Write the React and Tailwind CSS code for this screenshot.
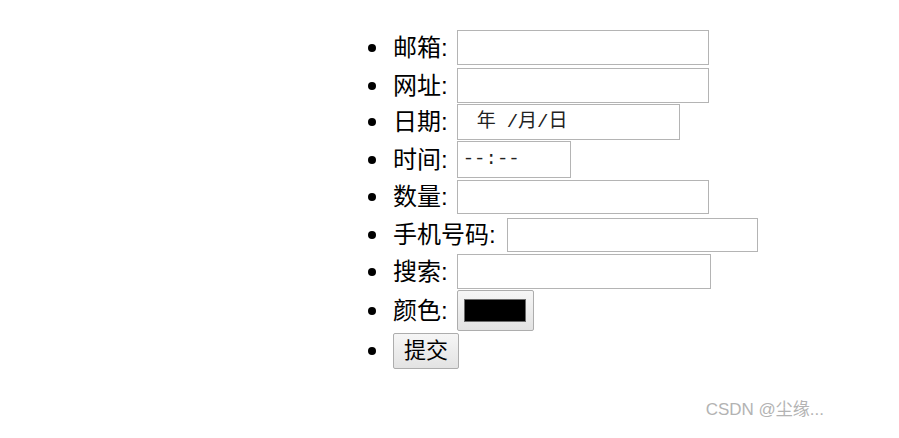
import React from 'react';

const Bullet = () => <span className="w-2 h-2 rounded-full bg-black mr-[17px] shrink-0" />;

const Field = ({ className = '', children }) => (
  <div className={`border border-[#b4b4b4] bg-white flex items-center ${className}`}>{children}</div>
);

const Row = ({ label, className = '', children }) => (
  <li className={`flex items-center ${className}`}>
    <Bullet />
    {label && <span className="text-[24px] leading-none mr-[9px] whitespace-nowrap">{label}</span>}
    {children}
  </li>
);

const App = () => {
  return (
    <div
      className="h-[438px] w-[899px] bg-white text-black flex flex-col"
      style={{ fontFamily: '"Liberation Sans", "Noto Sans CJK SC", sans-serif' }}
    >
      <ul className="pl-[368px] pt-[30px]">
        <Row label="邮箱:" className="h-[35px]">
          <Field className="w-[252px] h-[35px]" />
        </Row>
        <Row label="网址:" className="h-[35px] mt-[3px]">
          <Field className="w-[252px] h-[35px]" />
        </Row>
        <Row label="日期:" className="h-[36px] mt-[1px]">
          <Field className="w-[223px] h-[36px] pl-[19px] text-[19px] font-['Liberation_Mono','Noto_Sans_CJK_SC',monospace] text-[#222]">
            <span>年</span>
            <span className="ml-[11px]">/</span>
            <span>月</span>
            <span>/</span>
            <span>日</span>
          </Field>
        </Row>
        <Row label="时间:" className="h-[37px] mt-[1px]">
          <Field className="w-[114px] h-[37px] pl-[5px] text-[19px] font-['Liberation_Mono',monospace] text-[#222]">
            --:--
          </Field>
        </Row>
        <Row label="数量:" className="h-[34px] mt-[2px]">
          <Field className="w-[252px] h-[34px]" />
        </Row>
        <Row label="手机号码:" className="h-[34px] mt-[4px]">
          <Field className="w-[251px] h-[34px] ml-[2px]" />
        </Row>
        <Row label="搜索:" className="h-[35px] mt-[2px]">
          <Field className="w-[254px] h-[35px]" />
        </Row>
        <Row label="颜色:" className="h-[41px] mt-[1px]">
          <div className="w-[77px] h-[41px] border border-[#adadad] rounded-[2px] bg-gradient-to-b from-[#f6f6f6] to-[#e3e3e3] flex items-center justify-center">
            <div className="w-[62px] h-[23px] bg-black border border-[#6b6b6b]" />
          </div>
        </Row>
        <Row className="h-[36px] mt-[2px]">
          <button className="w-[66px] h-[36px] border border-[#adadad] rounded-[2px] bg-gradient-to-b from-[#f6f6f6] to-[#e3e3e3] text-[22px] leading-none">
            提交
          </button>
        </Row>
      </ul>
      <div className="mt-auto mb-[16px] flex justify-end pr-[75px]">
        <span className="text-[17px] text-[#b3b3b3]">CSDN @尘缘...</span>
      </div>
    </div>
  );
};

export default App;
